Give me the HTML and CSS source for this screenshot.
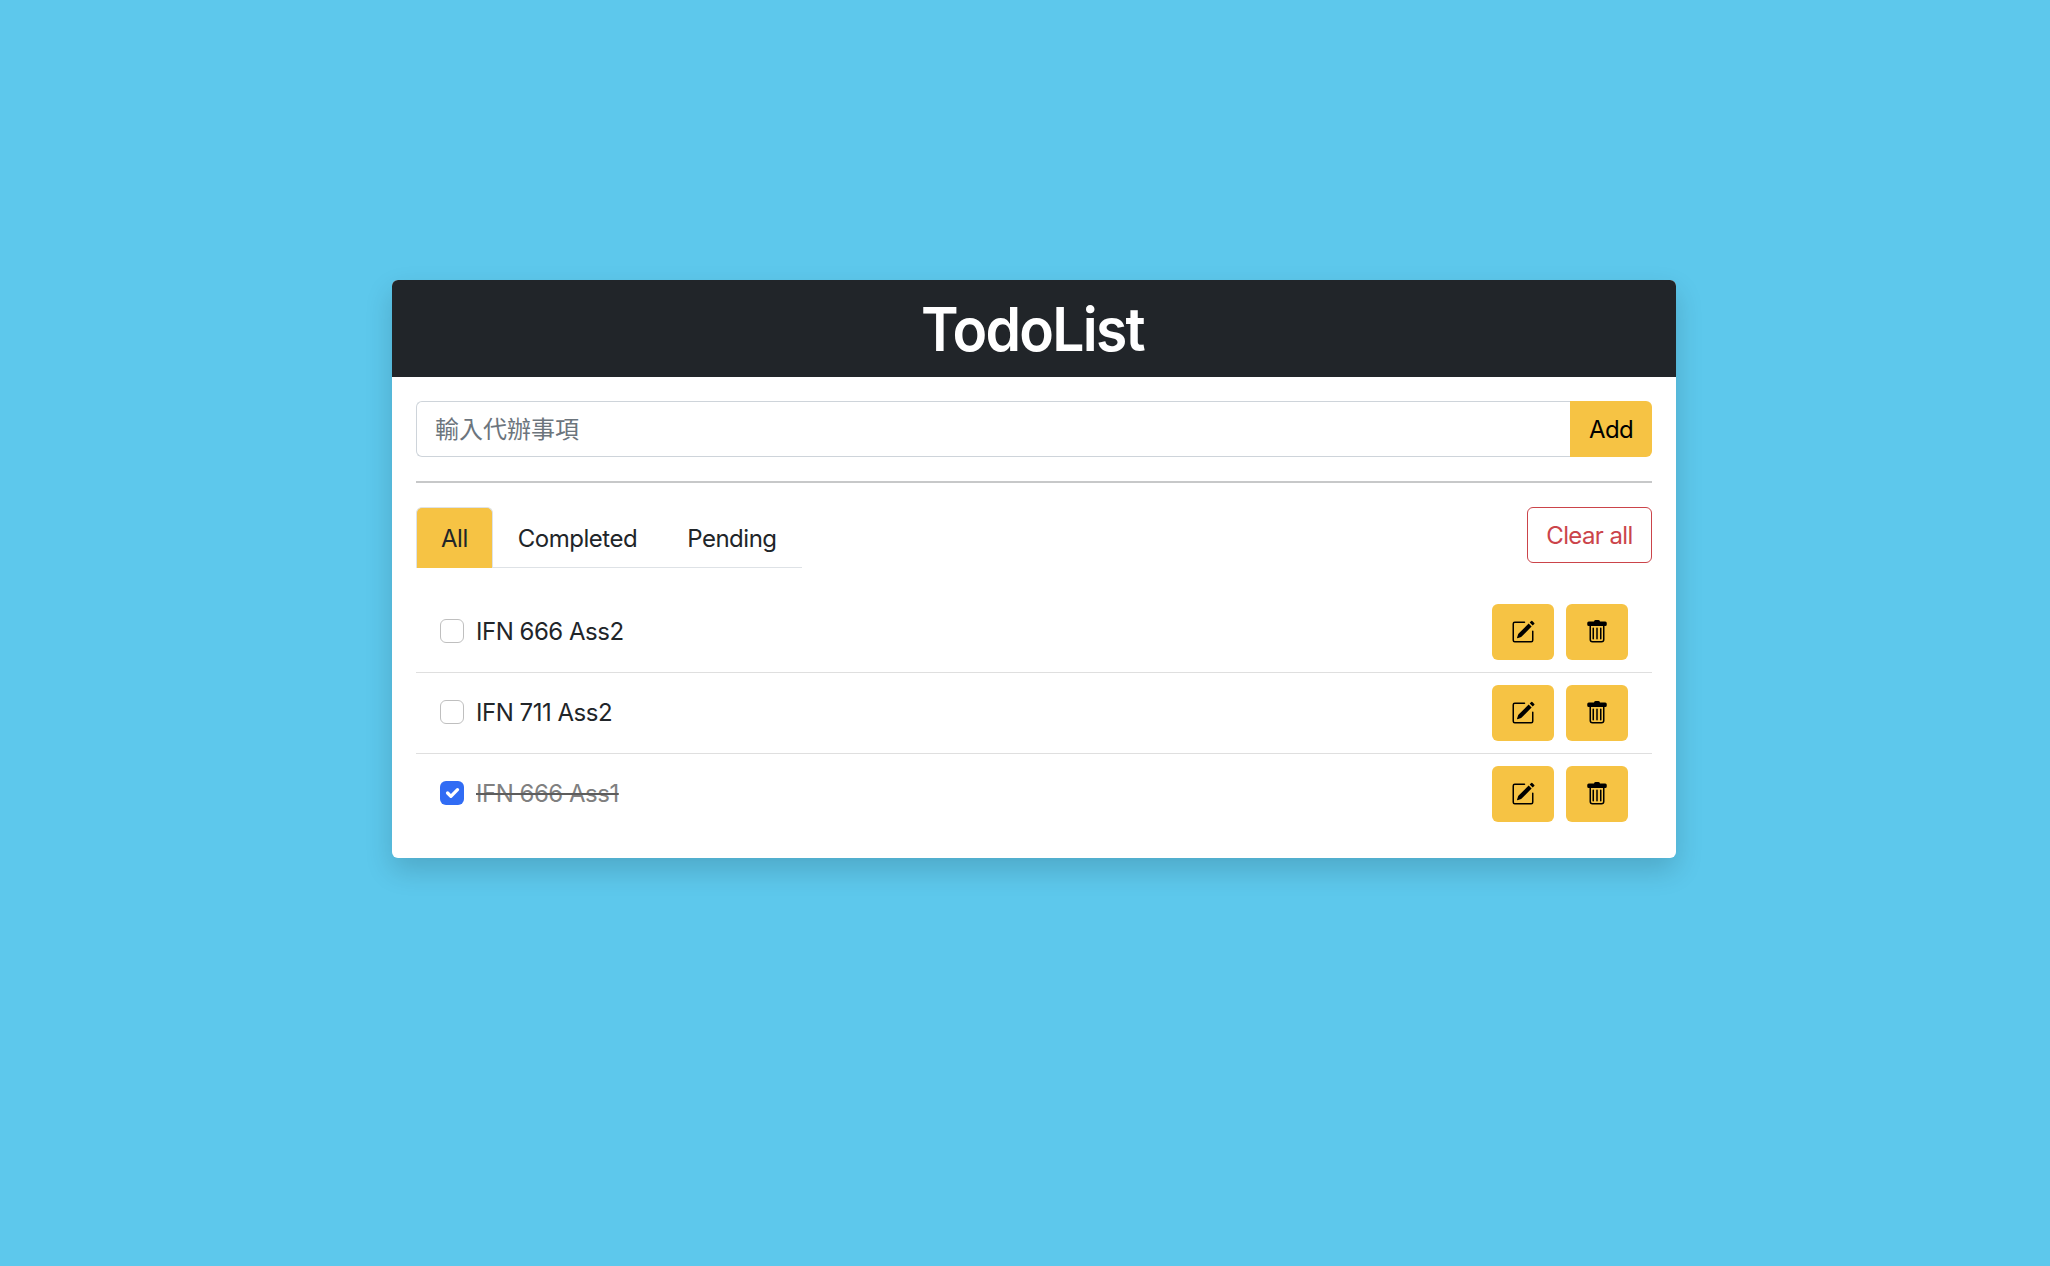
FILE: index.html
```html
<!DOCTYPE html>
<html lang="zh-Hant">
<head>
<meta charset="utf-8">
<title>TodoList</title>
<link rel="stylesheet" href="styles.css">
</head>
<body>
<svg class="sprite" aria-hidden="true">
  <symbol id="pencil-square" viewBox="0 0 16 16">
    <path d="M15.502 1.94a.5.5 0 0 1 0 .706L14.459 3.69l-2-2L13.502.646a.5.5 0 0 1 .707 0l1.293 1.293zm-1.75 2.456-2-2L4.939 9.21a.5.5 0 0 0-.121.196l-.805 2.414a.25.25 0 0 0 .316.316l2.414-.805a.5.5 0 0 0 .196-.12l6.813-6.814z"/>
    <path fill-rule="evenodd" d="M1 13.5A1.5 1.5 0 0 0 2.5 15h11a1.5 1.5 0 0 0 1.5-1.5v-6a.5.5 0 0 0-1 0v6a.5.5 0 0 1-.5.5h-11a.5.5 0 0 1-.5-.5v-11a.5.5 0 0 1 .5-.5H9a.5.5 0 0 0 0-1H2.5A1.5 1.5 0 0 0 1 2.5v11z"/>
  </symbol>
  <symbol id="trash" viewBox="0 0 16 16">
    <path d="M2.5 1a1 1 0 0 0-1 1v1a1 1 0 0 0 1 1H3v9a2 2 0 0 0 2 2h6a2 2 0 0 0 2-2V4h.5a1 1 0 0 0 1-1V2a1 1 0 0 0-1-1H10a1 1 0 0 0-1-1H7a1 1 0 0 0-1 1H2.5zM4 4h8v9a1 1 0 0 1-1 1H5a1 1 0 0 1-1-1V4zm1.5 1a.5.5 0 0 0-.5.5v7a.5.5 0 0 0 1 0v-7a.5.5 0 0 0-.5-.5zM8 5a.5.5 0 0 0-.5.5v7a.5.5 0 0 0 1 0v-7A.5.5 0 0 0 8 5zm2.5 0a.5.5 0 0 0-.5.5v7a.5.5 0 0 0 1 0v-7a.5.5 0 0 0-.5-.5z"/>
  </symbol>
</svg>
<main class="card">
  <header class="card-header"><h1 class="title">TodoList</h1></header>
  <div class="card-body">
    <form class="input-group">
      <input class="form-control" type="text" placeholder="輸入代辦事項">
      <button class="btn btn-add" type="button">Add</button>
    </form>
    <hr class="divider">
    <div class="toolbar">
      <ul class="tabs">
        <li class="tab tab-active">All</li>
        <li class="tab">Completed</li>
        <li class="tab">Pending</li>
      </ul>
      <button class="btn btn-clear" type="button">Clear all</button>
    </div>
    <ul class="list">
      <li class="item">
        <label class="check"><input class="check-input" type="checkbox"><span>IFN 666 Ass2</span></label>
        <button class="btn btn-icon" type="button" aria-label="Edit"><svg class="icon"><use href="#pencil-square"/></svg></button>
        <button class="btn btn-icon" type="button" aria-label="Delete"><svg class="icon"><use href="#trash"/></svg></button>
      </li>
      <li class="item">
        <label class="check"><input class="check-input" type="checkbox"><span>IFN 711 Ass2</span></label>
        <button class="btn btn-icon" type="button" aria-label="Edit"><svg class="icon"><use href="#pencil-square"/></svg></button>
        <button class="btn btn-icon" type="button" aria-label="Delete"><svg class="icon"><use href="#trash"/></svg></button>
      </li>
      <li class="item">
        <label class="check check-done"><input class="check-input" type="checkbox" checked><span>IFN 666 Ass1</span></label>
        <button class="btn btn-icon" type="button" aria-label="Edit"><svg class="icon"><use href="#pencil-square"/></svg></button>
        <button class="btn btn-icon" type="button" aria-label="Delete"><svg class="icon"><use href="#trash"/></svg></button>
      </li>
    </ul>
  </div>
</main>
</body>
</html>
```
FILE: styles.css
```css
*, *::before, *::after { box-sizing: border-box; }

body {
  margin: 0;
  min-height: 100vh;
  padding-top: 280px;
  background: #5dc8ec;
  color: #212529;
  font-family: Inter, "Noto Sans CJK TC", sans-serif;
  font-size: 24px;
  line-height: 36px;
  letter-spacing: -.48px;
}
ul { list-style: none; margin: 0; padding: 0; }
.sprite { display: none; }

.card {
  width: 1284px;
  margin: 0 0 0 392px;
  border-radius: 6px;
  background: #fff;
  box-shadow: 0 12px 28px rgba(0, 0, 0, .16);
}
.card-header {
  height: 97px;
  display: flex;
  align-items: center;
  justify-content: center;
  border-radius: 6px 6px 0 0;
  background: #212529;
  color: #fff;
}
.title {
  margin: 0;
  padding-right: 3px;
  font-size: 60px;
  font-weight: 600;
  line-height: 72px;
  letter-spacing: -1.8px;
  transform: scaleX(.95);
}
.card-body { padding: 24px; }

.input-group { display: flex; height: 56px; }
.form-control {
  flex: 1;
  min-width: 0;
  padding: 10px 18px 8px;
  border: 1px solid #ced4da;
  border-right: 0;
  border-radius: 6px 0 0 6px;
  font: inherit;
  letter-spacing: 0;
}
.form-control::placeholder { color: #6c757d; opacity: 1; }

.btn {
  display: flex;
  align-items: center;
  justify-content: center;
  height: 56px;
  padding: 0;
  border: 0;
  border-radius: 6px;
  background: #f6c344;
  color: #000;
  font: inherit;
  letter-spacing: -.6px;
}
.btn-add { width: 82px; padding-top: 2px; border-radius: 0 6px 6px 0; }
.btn-clear { width: 125px; padding-top: 2px; border: 1px solid #cb444a; background: #fff; color: #cb444a; }
.btn-icon { width: 62px; margin-left: 12px; }

.divider { height: 2px; margin: 24px 0; border: 0; background: #c7c8c9; }

.toolbar { display: flex; justify-content: space-between; align-items: flex-start; margin-bottom: 24px; }
.tabs { display: flex; height: 61px; border-bottom: 1px solid #dee2e6; }
.tab { height: 61px; padding: 14px 25px 0; }
.tab-active { border: 1px solid #dee2e6; border-bottom: 0; border-radius: 6px 6px 0 0; padding: 13px 24px 0; background: #f6c344; }

.item { display: flex; align-items: center; height: 81px; padding: 0 24px; border-bottom: 1px solid #dfdfdf; }
.item:last-child { height: 80px; border-bottom: 0; }
.check { flex: 1; display: flex; align-items: center; }
.check-input {
  appearance: none;
  width: 24px;
  height: 24px;
  margin: 0 12px 2px 0;
  border: 1px solid #bfbfbf;
  border-radius: 6px;
}
.check-input:checked {
  border: 0;
  background: #316cf4 url("data:image/svg+xml,%3Csvg xmlns='http://www.w3.org/2000/svg' viewBox='0 0 20 20'%3E%3Cpath fill='none' stroke='%23fff' stroke-linecap='round' stroke-linejoin='round' stroke-width='3' d='m6 10 3 3 6-6'/%3E%3C/svg%3E") center / 22px 22px no-repeat;
}
.check-done { color: #808080; text-decoration: line-through 2px #5c5c5c; }
.icon { width: 24px; height: 24px; fill: currentColor; }
```
